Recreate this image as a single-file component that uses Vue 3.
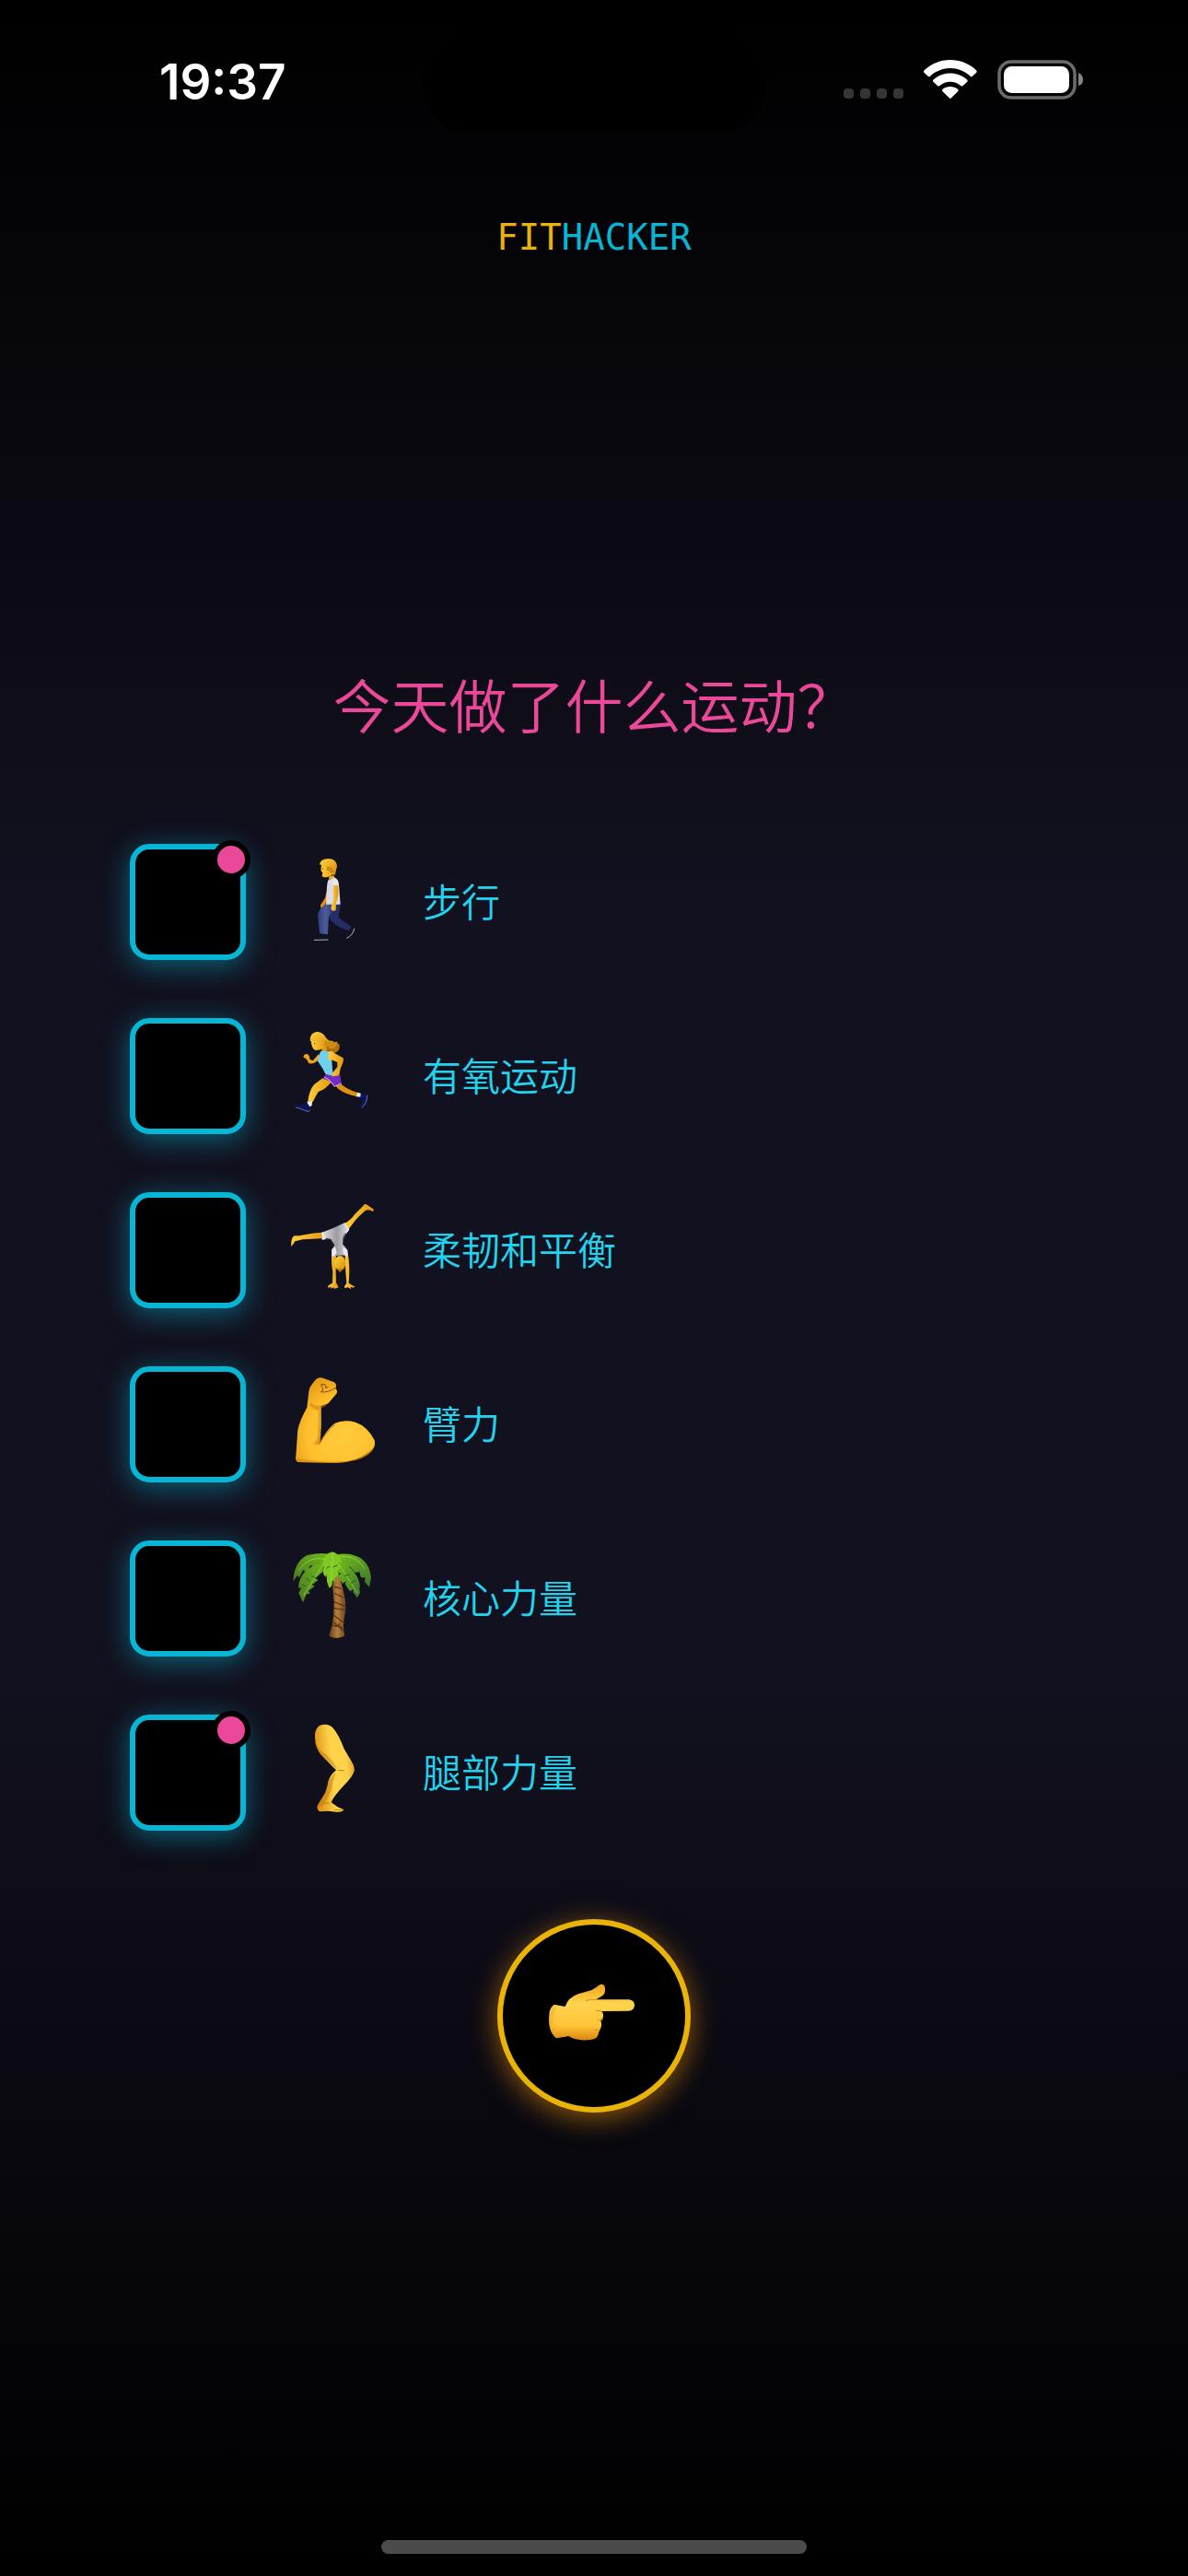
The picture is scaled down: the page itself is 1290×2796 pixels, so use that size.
<script setup>
import { ref } from 'vue'

const activities = ref([
  { id: 'walk', label: '步行', marked: true, checked: false, box: '30 48 300 318' },
  { id: 'run', label: '有氧运动', marked: false, checked: false, box: '30 75 300 318' },
  { id: 'flex', label: '柔韧和平衡', marked: false, checked: false, box: '30 72 300 318' },
  { id: 'arm', label: '臂力', marked: false, checked: false, box: '30 69 300 318' },
  { id: 'core', label: '核心力量', marked: false, checked: false, box: '30 66 300 318' },
  { id: 'leg', label: '腿部力量', marked: true, checked: false, box: '30 93 300 318' }
])
</script>

<template>
  <div class="page">
    <header class="status">
      <time class="clock">19:37</time>
      <div class="island"></div>
      <div class="indicators">
        <svg class="dots" width="65" height="43" viewBox="0 0 65 43" fill="#353535">
          <rect x="0" y="31" width="11" height="11" rx="4" />
          <rect x="18" y="31" width="11" height="11" rx="4" />
          <rect x="36" y="31" width="11" height="11" rx="4" />
          <rect x="54" y="31" width="11" height="11" rx="4" />
        </svg>
        <svg class="wifi" width="58" height="43" viewBox="371 75 174 129" fill="#fff">
          <path d="M373 117Q369 113 373 109C420 64 495 64 542 109Q546 113 542 117L529 129Q526 131 523 128C486 93 429 93 392 128Q389 131 386 129Z" />
          <path d="M403 147Q399 143 403 139C434 112 481 112 512 139Q516 143 512 147L499 159Q496 162 492 159C472 142 443 142 423 159Q419 162 416 159Z" />
          <path d="M432 177Q429 173 433 170C447 159 468 159 482 170Q486 173 483 177L461 199Q457.500 203 454 199Z" />
        </svg>
        <svg class="battery" width="94" height="43" viewBox="0 0 94 43">
          <rect x="2" y="2" width="82" height="39" rx="13" fill="none" stroke="#6b6b6c" stroke-width="3.500" />
          <rect x="7" y="7" width="71" height="29" rx="8.500" fill="#fff" />
          <path d="M88 14Q93 16 93 21.500T88 28Z" fill="#858585" />
        </svg>
      </div>
    </header>

    <p class="logo"><span class="fit">FIT</span><span class="hacker">HACKER</span></p>

    <main class="content">
      <h1 class="title">今天做了什么运动？</h1>

      <ul class="list">
        <li v-for="item in activities" :key="item.id">
          <label class="row" :for="item.id">
            <span class="tick">
              <input :id="item.id" v-model="item.checked" type="checkbox" />
              <span v-if="item.marked" class="badge"></span>
            </span>

            <svg class="icon" :viewBox="item.box" aria-hidden="true">
              <g v-if="item.id === 'walk'">
                <path d="M164 172L159 194L144 217L145 227L151 228L167 202Z" fill="#df9111" />
                <path d="M176 212L209 214L203 258L242 286Q246 293 236 300Q202 292 177 267L168 250Z" fill="#262c66" />
                <path d="M161 213L193 214Q190 236 171 252L168 313L141 310L135 250Q139 229 161 213Z" fill="url(#denim)" />
                <path d="M171 125Q174 135 168 141L190 141L187 119Z" fill="#efa91c" />
                <path d="M149 83Q143 99 147 108L151 111L149 123Q158 129 168 125Q190 120 197 95Q199 67 167 68Q150 71 149 83Z" fill="url(#skin)" />
                <path d="M141 85Q143 67 170 66Q196 66 197 91L192 118Q183 122 182 111L178 95L164 93L156 89Z" fill="url(#hair)" />
                <path d="M165 95L178 97L182 108Q178 115 173 103L164 101" fill="none" stroke="#a15c10" stroke-width="3" />
                <circle cx="151" cy="99" r="2" fill="#633510" />
                <path d="M170 135Q180 136 186 125Q203 131 204 149L209 215L162 215L165 157Q165 144 170 135Z" fill="#dcdbe3" />
                <path d="M186 151Q199 158 201 150Q206 183 195 211L194 234Q182 241 178 228L182 213L187 200Z" fill="url(#skin)" />
                <path d="M183 152L201 151L199 136L186 133Z" fill="#eae9ee" />
                <path d="M143 311L168 314L168 329L123 331Q123 323 135 320Z" fill="#101225" />
                <path d="M124 331L168 330" stroke="#b4b4bd" stroke-width="3" stroke-linecap="round" />
                <path d="M239 293L253 293Q254 310 228 325L228 315L240 307Z" fill="#101225" />
                <path d="M254 293Q251 315 229 325" fill="none" stroke="#b4b4bd" stroke-width="3" />
              </g>

              <g v-else-if="item.id === 'run'">
                <path d="M172 118Q183 128 201 121Q194 130 206 130Q209 155 190 158Q174 150 156 151L152 131Z" fill="#b36f09" />
                <path d="M141 178Q122 199 105 191Q100 176 89 174Q88 162 100 162Q109 165 109 179L119 184L138 162Z" fill="#f0a41b" />
                <path d="M190 248L208 257Q228 276 267 289L264 301Q223 292 202 276L188 259Z" fill="#df9111" />
                <path d="M151 241L182 249Q163 277 137 285Q129 298 119 318L103 317Q107 281 123 262Z" fill="url(#skin)" />
                <path d="M148 137L163 136L164 155L148 158Z" fill="#e49a16" />
                <path d="M112 114Q116 149 128 150Q157 150 163 127L142 103Z" fill="url(#skin)" />
                <path d="M110 119Q108 94 133 89Q154 91 164 112L173 119L188 120L177 131Q156 137 149 124L127 120Z" fill="url(#hair)" />
                <path d="M160 118Q181 129 199 122Q198 143 178 145Q166 137 154 132Z" fill="#cf8b12" />
                <path d="M145 153L170 152L180 169L183 214L187 235L161 229L151 209L134 184Q136 168 145 153Z" fill="#72d0ef" />
                <path d="M171 154Q181 149 193 161L218 175Q222 184 209 209L205 232Q192 243 181 234L184 223L199 204L199 189L180 181L170 183Z" fill="url(#skin)" />
                <path d="M161 227L186 235L208 231L213 261L188 268L173 250L153 243Z" fill="#742bc0" />
                <path d="M156 237L174 248L190 268L212 258" fill="none" stroke="#e2b8ff" stroke-width="3" />
                <path d="M100 317L117 316L116 329L107 336Z" fill="#eeeef4" />
                <path d="M100 322L109 333L111 347L104 350L62 334L66 328L85 328Z" fill="#0b145c" />
                <path d="M63 335L105 350L111 344" fill="none" stroke="#9aa1cf" stroke-width="2" />
                <path d="M264 287L275 290L276 302L261 301Z" fill="#eeeef4" />
                <path d="M276 291L294 293Q303 311 278 338L275 327L281 313L273 305Z" fill="#0b145c" />
                <path d="M296 296Q298 318 279 337" fill="none" stroke="#9aa1cf" stroke-width="2" />
                <circle cx="125" cy="128" r="2" fill="#68350e" />
              </g>

              <g v-else-if="item.id === 'flex'">
                <path d="M222 144Q245 131 256 113L282 88Q288 76 297 84L318 98L315 105Q302 97 290 102Q267 122 256 136L231 169Z" fill="url(#skin)" />
                <path d="M151 173Q104 176 75 184L59 184Q47 190 49 219Q57 210 61 202L87 196L147 193L161 194Z" fill="url(#skin)" />
                <path d="M181 238Q178 272 184 300L183 338Q165 346 169 353L179 350L178 356L188 352L189 357L203 352L195 337L194 300L195 247Z" fill="url(#skin)" />
                <path d="M232 237Q238 264 238 300L236 338L257 350L250 353L244 350L242 357L234 352L223 354L222 349L229 338L226 300L224 249Z" fill="url(#skin)" />
                <path d="M149 173L187 158L222 142L235 166L220 190L217 212L232 230L232 251Q208 243 181 255L180 232L190 214L178 195L149 196Z" fill="url(#suit)" />
                <path d="M149 173L157 193L150 196M222 143L235 164L225 176" fill="none" stroke="#ededf2" stroke-width="5" />
                <path d="M181 227L192 220L197 239L190 249L181 253ZM219 220L232 233L232 251L220 244L217 231Z" fill="#ebe9ef" />
                <path d="M161 193Q181 190 184 214M227 175Q216 183 218 213" fill="none" stroke="#343339" stroke-width="3" />
                <ellipse cx="208" cy="273" rx="18" ry="24" fill="url(#hair)" />
                <path d="M198 290L207 304L216 293Z" fill="#bd7310" />
              </g>

              <g v-else-if="item.id === 'arm'">
                <path d="M106 122Q106 107 129 82Q139 72 154 78L189 91Q199 99 193 110Q202 121 195 130L169 160L146 169L146 223Q147 257 140 293Q162 247 190 225Q220 211 258 221Q298 235 320 280Q325 302 307 317Q264 351 193 353L71 351Q61 347 64 329L70 246Q76 216 100 173Z" fill="url(#muscle)" />
                <path d="M66 340Q151 353 228 348Q278 342 319 300Q304 350 188 354L71 351Z" fill="#d7860b" opacity=".65" />
                <path d="M107 157Q127 170 146 166L169 159Q150 181 143 169L142 225L146 283L138 297Q132 289 119 295Q139 279 136 244L138 183Q115 179 107 157Z" fill="#c97b0b" opacity=".55" />
                <path d="M146 99L153 115L145 122Q169 126 193 109M163 110L159 99L146 97M159 109L169 106" fill="none" stroke="#8d4c0a" stroke-width="3" stroke-linejoin="round" />
                <path d="M140 293Q167 246 193 228" fill="none" stroke="#cb820d" stroke-width="3" />
              </g>

              <g v-else-if="item.id === 'core'">
                <path d="M187 153L206 153Q216 188 219 204Q227 228 226 261L219 304Q219 334 223 346Q198 361 172 347L183 309Q189 269 188 235L184 188Z" fill="url(#trunk)" />
                <path d="M188 186L211 193M188 207L218 222M188 236L225 251M188 257L225 262M186 279L223 306M182 298L219 331M181 312L216 319M204 306L204 318" stroke="#5b3415" stroke-width="4" />
                <path d="M169 80Q145 74 101 84Q58 104 55 170L68 150L75 157L88 132L97 140L112 117L126 122L158 107Z" fill="url(#leafA)" />
                <path d="M194 84Q226 74 261 87Q304 104 309 158L303 188L288 170L290 157L276 157L271 139L257 140L241 122L220 120Z" fill="url(#leafB)" />
                <path d="M158 108Q121 113 98 133Q72 159 72 191L82 189L73 207L87 238L99 210L110 210L105 200L125 185L116 180L136 166L128 158L151 138Z" fill="url(#leafA)" />
                <path d="M198 99Q236 112 257 143Q276 173 271 192L273 207L264 223L250 204L251 195L240 202L224 178L228 168L217 176L199 153L211 144L195 139Z" fill="url(#leafB)" />
                <path d="M184 73Q153 80 151 109Q158 122 152 134Q152 148 162 155L164 145L165 170L173 192L181 183L184 165L190 172L191 158L205 148L199 137Q212 127 207 116L198 111L213 106Q209 82 184 73Z" fill="#7fca22" />
                <path d="M184 77L179 169M154 111L89 216M203 112L264 207M158 97Q107 84 73 133M208 89Q262 82 288 129" fill="none" stroke="#a9dc56" stroke-width="2" />
                <path d="M164 127L174 119M184 123L199 117M115 152L130 159M96 157L110 169M84 180L97 184M222 151L239 146M241 175L259 166" stroke="#276315" stroke-width="3" />
              </g>

              <g v-else>
                <path d="M126 139Q124 109 142 98Q169 90 184 106Q204 129 221 175L245 215Q258 235 253 250Q245 270 220 294Q187 329 179 348L185 353L200 364L219 372Q218 381 196 380L168 377L143 379Q132 376 134 359L160 317Q169 292 169 281Q176 259 195 244Q159 207 146 194Q127 172 126 139Z" fill="url(#calf)" />
                <path d="M126 145Q132 176 164 195Q184 211 200 243Q165 213 146 194Q127 174 126 145ZM169 279Q178 269 194 249Q184 281 180 308L159 352L144 363L134 363L158 321Z" fill="#b96c0a" opacity=".45" />
                <path d="M201 244L221 246M157 353Q168 349 173 353M190 374L215 373" fill="none" stroke="#bf7d10" stroke-width="3" />
              </g>
            </svg>

            <span class="text">{{ item.label }}</span>
          </label>
        </li>
      </ul>

      <button class="next" type="button" aria-label="下一步">
        <svg width="96" height="66" viewBox="252 309 288 198" aria-hidden="true">
          <defs>
            <linearGradient id="hand" x1="0" y1="0" x2="0" y2="1">
              <stop offset="0" stop-color="#f2a51c" />
              <stop offset=".35" stop-color="#ffd44e" />
              <stop offset=".75" stop-color="#ffc336" />
              <stop offset="1" stop-color="#d88610" />
            </linearGradient>
          </defs>
          <path d="M311 387Q321 357 353 346L398 333Q412 325 421 317Q434 310 440 321Q445 345 430 353L411 364L519 364Q537 366 537 383Q536 400 517 401L429 402Q438 409 434 424L427 433Q433 446 425 461L420 472Q419 494 393 495Q347 500 323 483L282 490Q252 466 260 405Q263 389 275 380Z" fill="url(#hand)" />
          <path d="M410 365Q391 362 379 367M429 402L411 399M433 429L419 430M425 461L407 464" fill="none" stroke="#dc9317" stroke-width="3" stroke-linecap="round" />
          <path d="M275 381Q253 414 261 458L282 490L320 483Q285 480 276 460Q264 430 282 393Z" fill="#e89a1c" opacity=".35" />
        </svg>
      </button>
    </main>

    <div class="home"></div>

    <svg class="paints" width="0" height="0" aria-hidden="true">
      <defs>
        <linearGradient id="skin"><stop offset="0" stop-color="#ffcd36" /><stop offset="1" stop-color="#e39a12" /></linearGradient>
        <linearGradient id="hair" x1="0" y1="0" x2="1" y2="1"><stop offset="0" stop-color="#ffd43d" /><stop offset="1" stop-color="#d58b0c" /></linearGradient>
        <linearGradient id="denim"><stop offset="0" stop-color="#313b78" /><stop offset=".45" stop-color="#4c5d9c" /><stop offset="1" stop-color="#292f6b" /></linearGradient>
        <linearGradient id="suit"><stop offset="0" stop-color="#e2e1e6" /><stop offset=".55" stop-color="#9c9ba2" /><stop offset="1" stop-color="#dad9df" /></linearGradient>
        <radialGradient id="muscle" cx=".6" cy=".68" r=".7"><stop offset="0" stop-color="#ffcb3d" /><stop offset=".65" stop-color="#ffc02b" /><stop offset="1" stop-color="#e7a01b" /></radialGradient>
        <linearGradient id="calf" x1="0" y1=".4" x2="1" y2=".2"><stop offset="0" stop-color="#dc9115" /><stop offset=".4" stop-color="#ffd348" /><stop offset=".75" stop-color="#ffd24b" /><stop offset="1" stop-color="#e1991a" /></linearGradient>
        <linearGradient id="trunk"><stop offset="0" stop-color="#66401c" /><stop offset=".5" stop-color="#b57c3c" /><stop offset="1" stop-color="#70451e" /></linearGradient>
        <linearGradient id="leafA" x1="0" y1="1" x2="1" y2="0"><stop offset="0" stop-color="#4a7924" /><stop offset="1" stop-color="#6cb81a" /></linearGradient>
        <linearGradient id="leafB" x1="0" y1="0" x2="1" y2="1"><stop offset="0" stop-color="#74c018" /><stop offset="1" stop-color="#3c742e" /></linearGradient>
      </defs>
    </svg>
  </div>
</template>

<style>
body {
  background: #000;
}
</style>

<style scoped>
.page {
  position: relative;
  box-sizing: border-box;
  min-height: 100vh;
  padding-bottom: 24px;
  display: flex;
  flex-direction: column;
  background: linear-gradient(#000, #12111f 35%, #12111f 65%, #000);
  font-family: "Noto Sans CJK SC", sans-serif;
  font-weight: 350;
}

.status {
  display: grid;
  grid-template-columns: 1fr 375px 1fr;
  align-items: end;
  height: 144px;
}

.clock {
  padding-left: 173px;
  align-self: center;
  padding-top: 34px;
  font: 600 53px/60px Inter, sans-serif;
  color: #fff;
}

.island {
  height: 111px;
  border-radius: 56px;
  background: #000;
}

.indicators {
  display: flex;
  justify-content: flex-end;
  gap: 22px;
  padding: 0 113px 36px 0;
}

.logo {
  margin: 84px 0 0;
  text-align: center;
  font: 400 39px/60px "DejaVu Sans Mono", monospace;
}

.fit {
  color: #eab308;
}

.hacker {
  color: #06b6d4;
}

.content {
  display: flex;
  flex-direction: column;
  align-items: center;
  padding-top: 433px;
}

.title {
  margin: 0;
  font-size: 63px;
  line-height: 84px;
  font-weight: 350;
  color: #ec4899;
}

.list {
  align-self: stretch;
  display: flex;
  flex-direction: column;
  gap: 63px;
  margin: 111px 0 96px;
  padding: 0 141px;
  list-style: none;
}

.row {
  display: flex;
  align-items: center;
}

.tick {
  position: relative;
  width: 126px;
  height: 126px;
}

.tick input {
  appearance: none;
  box-sizing: border-box;
  display: block;
  width: 100%;
  height: 100%;
  margin: 0;
  border: 6px solid #06b6d4;
  border-radius: 21px;
  background: #000;
  box-shadow: 0 6px 30px rgba(6, 182, 212, 0.5);
}

.badge {
  position: absolute;
  top: -4px;
  right: -5px;
  width: 30px;
  height: 30px;
  border: 6px solid #000;
  border-radius: 50%;
  background: #ec4899;
}

.icon {
  width: 100px;
  height: 106px;
  margin: 0 49px 0 43px;
}

.text {
  padding-bottom: 4px;
  font-size: 42px;
  line-height: 60px;
  color: #22d3ee;
}

.next {
  display: flex;
  align-items: center;
  justify-content: center;
  width: 210px;
  height: 210px;
  padding: 0 6px 6px 0;
  border: 6px solid #eab308;
  border-radius: 50%;
  background: #000;
  box-shadow: 0 6px 30px rgba(234, 140, 8, 0.6);
}

.home {
  width: 462px;
  height: 15px;
  margin: auto auto 0;
  border-radius: 8px;
  background: #4b4b4c;
}

.paints {
  position: absolute;
}
</style>
